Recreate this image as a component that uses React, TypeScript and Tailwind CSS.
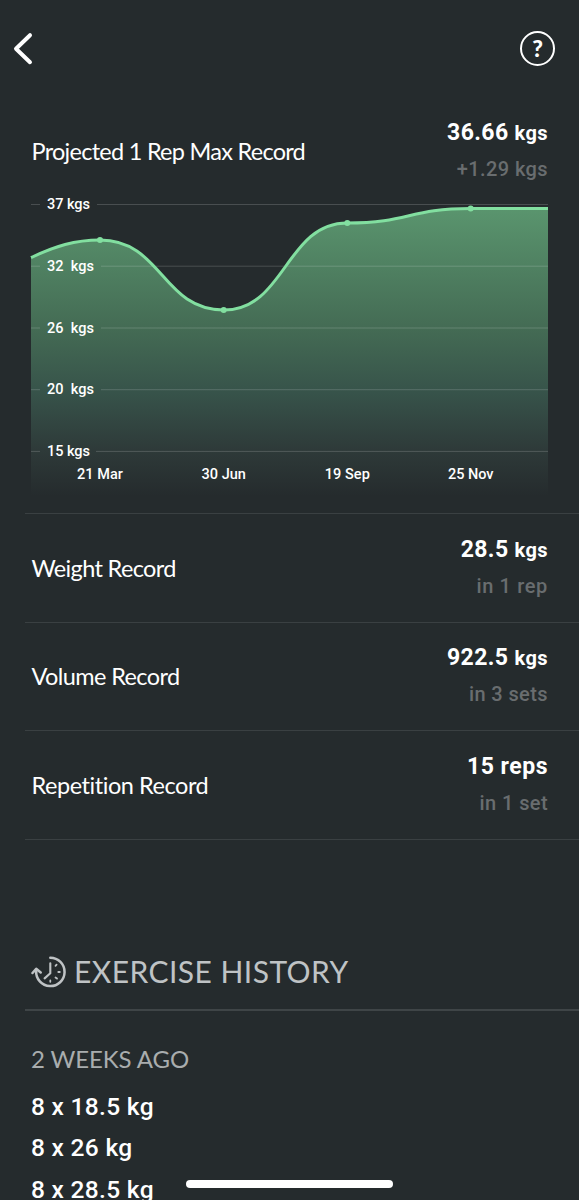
type RecordProps = {
  title: string;
  titleClass: string;
  value: string;
  unit: string;
  unitClass: string;
  valueClass: string;
  detail: string;
  detailClass: string;
};

const records: RecordProps[] = [
  {
    title: "Weight Record",
    titleClass: "tracking-[-0.65px]",
    value: "28.5",
    unit: "kgs",
    unitClass: "text-[20px]",
    valueClass: "tracking-[0.4px]",
    detail: "in 1 rep",
    detailClass: "tracking-[0.65px]",
  },
  {
    title: "Volume Record",
    titleClass: "tracking-[-0.6px]",
    value: "922.5",
    unit: "kgs",
    unitClass: "text-[20px]",
    valueClass: "tracking-[0.4px]",
    detail: "in 3 sets",
    detailClass: "tracking-[0.4px]",
  },
  {
    title: "Repetition Record",
    titleClass: "tracking-[-0.45px]",
    value: "15",
    unit: "reps",
    unitClass: "text-[23px]",
    valueClass: "tracking-[0.5px]",
    detail: "in 1 set",
    detailClass: "tracking-[0.4px]",
  },
];

const gridLines = [
  { y: 14.5, label: "37 kgs", width: 43, start: 97 },
  { y: 76.2, label: "32\u00a0 kgs", width: 47, start: 101 },
  { y: 138, label: "26\u00a0 kgs", width: 47, start: 101 },
  { y: 199.7, label: "20\u00a0 kgs", width: 47, start: 101 },
  { y: 261.4, label: "15 kgs", width: 43, start: 96 },
];

const points = [
  { x: 100, y: 50, label: "21 Mar", width: 46 },
  { x: 223.7, y: 120, label: "30 Jun", width: 44.5 },
  { x: 347.3, y: 33, label: "19 Sep", width: 45 },
  { x: 470.7, y: 18.5, label: "25 Nov", width: 45.5 },
];

const sets = ["8 x 18.5 kg", "8 x 26 kg", "8 x 28.5 kg"];

const curve =
  "M31 67.7C55 56 75 50 100 50C162 50 162 120 223.7 120C285.5 120 285.5 33 347.3 33C409 33 409 18.5 470.7 18.5H548";

const RecordRow = ({
  title,
  titleClass,
  value,
  unit,
  unitClass,
  valueClass,
  detail,
  detailClass,
}: RecordProps) => {
  return (
    <div className="ml-[25px] h-[108.6px] pl-[6.5px] pr-[31px] flex justify-between items-center border-b border-[#3a4042]">
      <h3 className={`pt-px font-[Lato] text-[23.5px] ${titleClass}`}>{title}</h3>
      <div className="flex flex-col items-end font-[Roboto]">
        <div className={`text-[23px] leading-9 font-bold ${valueClass}`}>
          {value} <span className={unitClass}>{unit}</span>
        </div>
        <div className={`text-[20px] leading-9 font-medium text-[#696d6f] ${detailClass}`}>
          {detail}
        </div>
      </div>
    </div>
  );
};

const Chart = () => {
  return (
    <svg className="block shrink-0" width="579" height="323" viewBox="0 0 579 323">
      <defs>
        <linearGradient id="area" x1="0" y1="18" x2="0" y2="306" gradientUnits="userSpaceOnUse">
          <stop offset="0" stopColor="#5a956e" />
          <stop offset="0.42" stopColor="#446b54" />
          <stop offset="0.64" stopColor="#37534a" />
          <stop offset="0.84" stopColor="#2e3a39" />
          <stop offset="1" stopColor="#252b2d" />
        </linearGradient>
      </defs>
      <path d={`${curve}V306H31Z`} fill="url(#area)" />
      {gridLines.map(({ y, label, width, start }) => (
        <g key={label}>
          <path d={`M31 ${y}H40M${start} ${y}H548`} stroke="#fff" strokeOpacity="0.17" />
          <text
            x="47"
            y={y + 4.6}
            textLength={width}
            lengthAdjust="spacing"
            className="font-[Roboto] text-[14.5px] font-medium fill-white"
          >
            {label}
          </text>
        </g>
      ))}
      <path d={curve} fill="none" stroke="#82dfa0" strokeWidth="3" />
      {points.map(({ x, y, label, width }) => (
        <g key={label}>
          <circle cx={x} cy={y} r="3" fill="#82dfa0" />
          <text
            x={x - width / 2}
            y="289"
            textLength={width}
            lengthAdjust="spacing"
            className="font-[Roboto] text-[14.5px] font-medium fill-white"
          >
            {label}
          </text>
        </g>
      ))}
    </svg>
  );
};

const HistoryIcon = () => {
  return (
    <svg
      width="36"
      height="34"
      viewBox="0 0 36 34"
      fill="none"
      stroke="#bfc3c5"
      strokeWidth="2.5"
      strokeLinecap="round"
      strokeLinejoin="round"
    >
      <path d="M19.3 2.7A14.2 14.2 0 1 1 5.2 16" />
      <path d="M1.5 18L5.2 13.8L9.7 17.4" />
      <path d="M19.3 8.2V18.2L13.6 23.4" strokeWidth="2.1" />
      <path
        d="M24.5 10.8L25.6 9.6M27.3 17H28.8M24.5 22.5L26 23.6M19.3 25.5V26.8"
        strokeWidth="1.8"
      />
    </svg>
  );
};

const App = () => {
  return (
    <div className="relative w-[579px] h-[1200px] overflow-hidden bg-[#252b2d] text-white flex flex-col">
      <header className="h-[97px] pl-[13px] pr-[24px] flex justify-between items-center shrink-0">
        <svg width="20" height="34" viewBox="0 0 20 34" fill="none">
          <path
            d="M17 3.2L3 16.7L17 30.2"
            stroke="#fff"
            strokeWidth="4"
            strokeLinecap="round"
            strokeLinejoin="round"
          />
        </svg>
        <div className="size-[35px] rounded-full border-[2.5px] border-white flex justify-center items-center font-[Lato] text-[23px] leading-none font-black">
          ?
        </div>
      </header>

      <div className="h-[93px] pt-[17.5px] pl-[31.5px] pr-[31px] flex justify-between shrink-0">
        <h3 className="pt-[19px] font-[Lato] text-[23.5px] tracking-[-0.73px]">
          Projected 1 Rep Max Record
        </h3>
        <div className="flex flex-col items-end font-[Roboto]">
          <div className="text-[23px] leading-9 font-bold tracking-[0.4px]">
            36.66 <span className="text-[20px]">kgs</span>
          </div>
          <div className="text-[20px] leading-9 font-medium text-[#696d6f] tracking-[0.4px]">
            +1.29 kgs
          </div>
        </div>
      </div>

      <Chart />

      <div className="ml-[25px] border-t border-[#3a4042]"></div>
      <div className="shrink-0">
        {records.map((record) => (
          <RecordRow key={record.title} {...record} />
        ))}
      </div>

      <div className="ml-[25px] h-[171px] pl-[6px] pb-[20px] flex items-end gap-[7px] border-b-2 border-[#3f4547] shrink-0">
        <HistoryIcon />
        <h2 className="pb-px font-[Lato] text-[30px] leading-[34px] tracking-[0.45px] text-[#bfc3c5]">
          EXERCISE HISTORY
        </h2>
      </div>

      <div className="pt-[30px] pl-[31px] shrink-0">
        <h4 className="font-[Lato] text-[24px] leading-9 tracking-[-0.1px] text-[#a9adae]">
          2 WEEKS AGO
        </h4>
        <ul className="pt-[9px] font-[Roboto] text-[24.5px] leading-[41.7px] tracking-[0.3px] font-medium">
          {sets.map((set) => (
            <li key={set}>{set}</li>
          ))}
        </ul>
      </div>

      {/* home indicator */}
      <div className="absolute left-[186px] top-[1180px] w-[207px] h-[8px] rounded-full bg-white"></div>
    </div>
  );
};

export default App;
